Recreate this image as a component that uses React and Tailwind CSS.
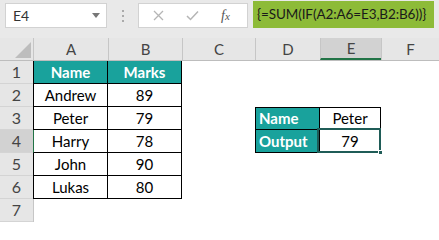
import React from "react";

const rowsData = [
  { n: 1, a: "Name", b: "Marks", head: true },
  { n: 2, a: "Andrew", b: "89" },
  { n: 3, a: "Peter", b: "79", d: "Name", e: "Peter" },
  { n: 4, a: "Harry", b: "78", d: "Output", e: "79", sel: true },
  { n: 5, a: "John", b: "90" },
  { n: 6, a: "Lukas", b: "80" },
  { n: 7 },
];

function Row({ r }) {
  const inTable = r.n <= 6;
  const rightTable = r.n === 3 || r.n === 4;
  const aBase = "h-full flex items-center justify-center text-[15px] text-black";
  return (
    <div className="flex h-[23px]">
      <div
        className={
          "w-[33px] h-full flex items-center justify-center text-[16px] text-[#444] border-b border-[#d4d4d4] " +
          (r.sel ? "bg-[#d2d2d2]" : "bg-[#e6e6e6]")
        }
      >
        {r.n}
      </div>
      {/* A */}
      <div
        className={
          "w-[75px] border-l " +
          (r.sel ? "border-l-[#217346] " : inTable ? "border-l-black " : "border-l-[#c6c6c6] ") +
          (inTable ? "border-r border-r-black border-b border-b-black " : "") +
          (r.head ? "bg-[#19a29c] font-bold " : "") +
          aBase
        }
        style={r.head ? { color: "#fff" } : undefined}
      >
        {r.a}
      </div>
      {/* B */}
      <div
        className={
          "w-[74px] " +
          (inTable ? "border-r border-black border-b " : "") +
          (r.head ? "bg-[#19a29c] font-bold " : "") +
          aBase
        }
        style={r.head ? { color: "#fff" } : undefined}
      >
        {r.b}
      </div>
      {/* C */}
      <div className="w-[73px] h-full" />
      {/* D */}
      <div
        className={
          "w-[65px] " +
          (rightTable
            ? "border-l border-r border-b border-black bg-[#19a29c] font-bold justify-start pl-[3px] text-white "
            : "") +
          (r.n === 3 ? "border-t " : "") +
          "h-full flex items-center text-[15px]"
        }
      >
        {r.d}
      </div>
      {/* E */}
      <div
        className={
          "w-[61px] relative " +
          (rightTable ? "border-r border-b border-black " : "") +
          (r.n === 3 ? "border-t " : "") +
          aBase
        }
      >
        {r.e}
        {r.sel && (
          <div className="absolute left-[-3px] top-[-2px] right-[-1px] bottom-[-1px] border-2 border-[#1f5c57]">
            <div className="absolute right-[-4px] bottom-[-4px] w-[5px] h-[5px] bg-[#1f5c57] border border-white" />
          </div>
        )}
      </div>
      <div className="flex-1 h-full" />
    </div>
  );
}

export default function App() {
  return (
    <div
      className="w-[439px] h-[222px] overflow-hidden bg-white"
      style={{ fontFamily: "Lato, 'Open Sans', sans-serif" }}
    >
      {/* Toolbar */}
      <div className="h-[38px] bg-[#e9e9e9] flex items-start">
        <div className="mt-[3px] ml-[5px] w-[102px] h-[25px] bg-white border border-[#d2d2d2] flex items-center justify-between pl-[7px] pr-[6px]">
          <span className="text-[14px] text-[#333]">E4</span>
          <svg width="8" height="5" viewBox="0 0 8 5">
            <path d="M0 0 L8 0 L4 5 Z" fill="#777" />
          </svg>
        </div>
        <div className="w-[31px] h-[31px] flex flex-col items-center justify-center gap-[3px]">
          <div className="w-[2px] h-[2px] bg-[#aaa]" />
          <div className="w-[2px] h-[2px] bg-[#aaa]" />
          <div className="w-[2px] h-[2px] bg-[#aaa]" />
        </div>
        <div className="mt-[3px] w-[110px] h-[25px] bg-white border border-[#d2d2d2] flex items-center">
          <svg className="ml-[14px]" width="11" height="11" viewBox="0 0 11 11">
            <path d="M1 1 L10 10 M10 1 L1 10" stroke="#b5b5b5" strokeWidth="1.3" />
          </svg>
          <svg className="ml-[22px]" width="13" height="11" viewBox="0 0 13 11">
            <path d="M1 6 L4.5 9.5 L12 1.5" stroke="#b5b5b5" strokeWidth="1.5" fill="none" />
          </svg>
          <span
            className="ml-[22px] text-[14px] italic text-[#555]"
            style={{ fontFamily: "'Liberation Serif', serif" }}
          >
            f<span className="text-[11px]">x</span>
          </span>
        </div>
        <div className="ml-[5px] mt-[1px] w-[181px] h-[27px] bg-[#8dbb38] flex items-center pl-[4px] text-[13.5px] tracking-[-0.1px] text-[#1a1a1a] whitespace-nowrap">
          {"{=SUM(IF(A2:A6=E3,B2:B6))}"}
        </div>
      </div>
      {/* Column header row */}
      <div className="flex h-[23px] bg-[#e6e6e6] border-b border-[#bdbdbd] text-[15px] text-[#444]">
        <div className="w-[33px] h-full relative">
          <svg className="absolute right-[2px] bottom-[2px]" width="16" height="16" viewBox="0 0 16 16">
            <path d="M16 0 L16 16 L0 16 Z" fill="#bdbdbd" />
          </svg>
        </div>
        <div className="w-[75px] h-full flex items-center justify-center border-l border-[#c6c6c6]">A</div>
        <div className="w-[74px] h-full flex items-center justify-center border-l border-[#c6c6c6]">B</div>
        <div className="w-[73px] h-full flex items-center justify-center border-l border-[#c6c6c6]">C</div>
        <div className="w-[65px] h-full flex items-center justify-center border-l border-[#c6c6c6]">D</div>
        <div className="w-[61px] h-full flex items-center justify-center border-l border-[#c6c6c6] bg-[#d2d2d2] border-b-2 border-b-[#217346]">E</div>
        <div className="flex-1 h-full flex items-center justify-center border-l border-[#c6c6c6]">F</div>
      </div>
      {rowsData.map((r) => (
        <Row key={r.n} r={r} />
      ))}
    </div>
  );
}
